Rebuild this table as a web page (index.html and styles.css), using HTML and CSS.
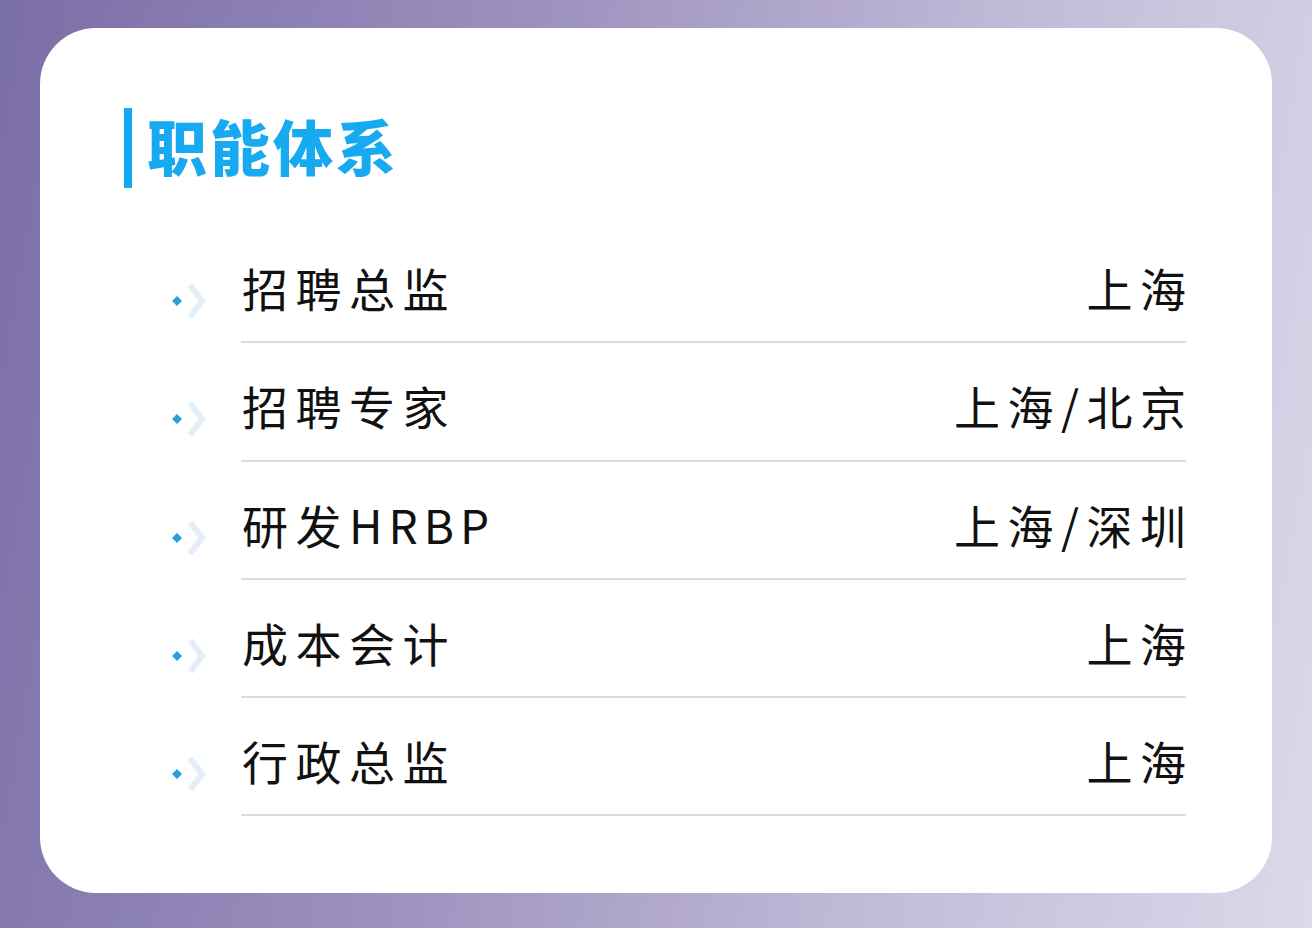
FILE: index.html
```html
<!DOCTYPE html>
<html lang="zh">
<head>
<meta charset="utf-8">
<link rel="stylesheet" href="styles.css">
</head>
<body>
<div class="card">
  <div class="title"><span class="bar"></span><h1>职能体系</h1></div>
  <ul class="list">
    <li class="row"><span class="icon"><svg width="46" height="40" viewBox="0 0 46 40"><polyline points="25,4 37,20 25,36" fill="none" stroke="#e3eef9" stroke-width="6"/><polygon points="12,15 17,20 12,25 7,20" fill="#2a9fe0"/></svg></span><div class="content"><span class="name">招聘总监</span><span class="city">上海</span></div></li>
    <li class="row"><span class="icon"><svg width="46" height="40" viewBox="0 0 46 40"><polyline points="25,4 37,20 25,36" fill="none" stroke="#e3eef9" stroke-width="6"/><polygon points="12,15 17,20 12,25 7,20" fill="#2a9fe0"/></svg></span><div class="content"><span class="name">招聘专家</span><span class="city">上海/北京</span></div></li>
    <li class="row"><span class="icon"><svg width="46" height="40" viewBox="0 0 46 40"><polyline points="25,4 37,20 25,36" fill="none" stroke="#e3eef9" stroke-width="6"/><polygon points="12,15 17,20 12,25 7,20" fill="#2a9fe0"/></svg></span><div class="content"><span class="name">研发<span class="latin">HRBP</span></span><span class="city">上海/深圳</span></div></li>
    <li class="row"><span class="icon"><svg width="46" height="40" viewBox="0 0 46 40"><polyline points="25,4 37,20 25,36" fill="none" stroke="#e3eef9" stroke-width="6"/><polygon points="12,15 17,20 12,25 7,20" fill="#2a9fe0"/></svg></span><div class="content"><span class="name">成本会计</span><span class="city">上海</span></div></li>
    <li class="row"><span class="icon"><svg width="46" height="40" viewBox="0 0 46 40"><polyline points="25,4 37,20 25,36" fill="none" stroke="#e3eef9" stroke-width="6"/><polygon points="12,15 17,20 12,25 7,20" fill="#2a9fe0"/></svg></span><div class="content"><span class="name">行政总监</span><span class="city">上海</span></div></li>
  </ul>
</div>
</body>
</html>
```
FILE: styles.css
```css
html, body {
  margin: 0;
  padding: 0;
}
body {
  width: 1312px;
  height: 928px;
  overflow: hidden;
  background: linear-gradient(100deg, #7a6ea6 0%, #9a8fbd 35%, #c2bbd8 70%, #ddd8ea 100%);
  font-family: "Noto Sans CJK SC", "Noto Sans", sans-serif;
  padding-top: 28px;
  box-sizing: border-box;
}
.card {
  margin-left: 40px;
  width: 1232px;
  height: 865px;
  background: #ffffff;
  border-radius: 56px;
  box-sizing: border-box;
  padding: 80px 86px 0 84px;
}
.title {
  display: flex;
  align-items: center;
  height: 80px;
  gap: 15px;
}
.bar {
  width: 8px;
  height: 80px;
  background: #16a8f0;
}
.title h1 {
  margin: 0;
  font-size: 60px;
  font-weight: 900;
  color: #18aaf0;
  line-height: 1;
  letter-spacing: 3px;
  margin-top: -6px;
}
.list {
  list-style: none;
  margin: 37px 0 0 36px;
  padding: 0;
}
.row {
  display: flex;
  height: 118.25px;
}
.icon {
  width: 81px;
  flex: none;
  display: flex;
  align-items: center;
  padding-left: 5px;
  padding-top: 34px;
  box-sizing: border-box;
}
.icon svg {
  display: block;
}
.content {
  flex: 1;
  display: flex;
  justify-content: space-between;
  align-items: center;
  border-bottom: 2px solid #dcdcdc;
  padding-top: 8px;
  box-sizing: border-box;
  font-size: 46px;
  color: #111111;
  letter-spacing: 7.5px;
}
.name {
  margin-left: 1px;
}
.latin {
  letter-spacing: 6px;
}
.city {
  margin-right: -7.5px;
}
```
